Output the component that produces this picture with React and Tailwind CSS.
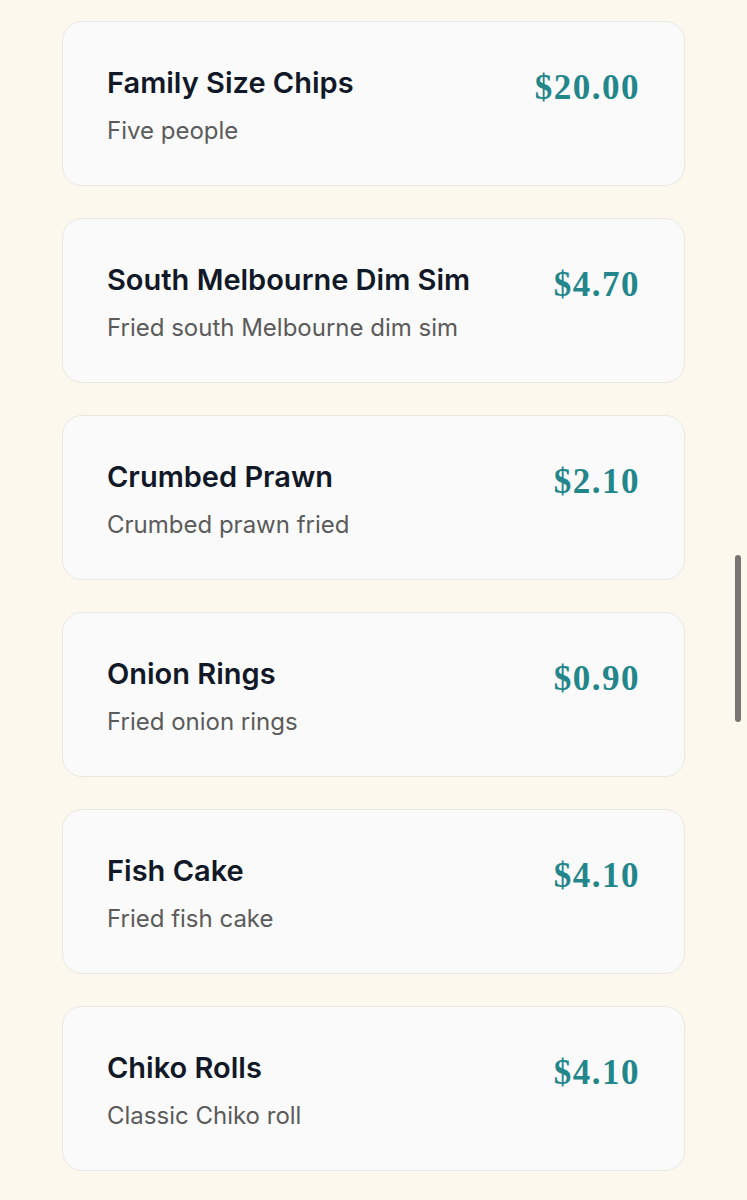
const items = [
  { name: "Family Size Chips", desc: "Five people", price: "$20.00" },
  { name: "South Melbourne Dim Sim", desc: "Fried south Melbourne dim sim", price: "$4.70" },
  { name: "Crumbed Prawn", desc: "Crumbed prawn fried", price: "$2.10" },
  { name: "Onion Rings", desc: "Fried onion rings", price: "$0.90" },
  { name: "Fish Cake", desc: "Fried fish cake", price: "$4.10" },
  { name: "Chiko Rolls", desc: "Classic Chiko roll", price: "$4.10" },
];

export default function App() {
  return (
    <div
      className="relative min-h-screen bg-[#fdf8ee] pt-[21px] pb-[28px] pl-[62px] pr-[62px]"
      style={{ fontFamily: "Inter, 'Noto Sans', sans-serif" }}
    >
      <div className="flex flex-col gap-[32px]">
        {items.map((it) => (
          <div
            key={it.name}
            className="h-[165px] bg-[#fafafa] border border-[#e9e7e3] rounded-[20px] pl-[44px] pr-[44px] pt-[45px] flex justify-between items-start"
          >
            <div className="flex flex-col gap-[16px]">
              <p className="text-[29px] leading-[32px] font-semibold text-[#111827]">{it.name}</p>
              <p className="text-[24px] leading-[32px] text-[#5b5b5b]">{it.desc}</p>
            </div>
            <p
              className="text-[35px] leading-[42px] font-bold text-[#23868b] tracking-[1.5px]"
              style={{ fontFamily: "'Liberation Serif', 'DejaVu Serif', serif", fontVariantNumeric: "oldstyle-nums" }}
            >
              {it.price}
            </p>
          </div>
        ))}
      </div>
      <div className="absolute right-[6px] top-[555px] w-[6px] h-[167px] rounded-full bg-[#7a7572]" />
    </div>
  );
}
